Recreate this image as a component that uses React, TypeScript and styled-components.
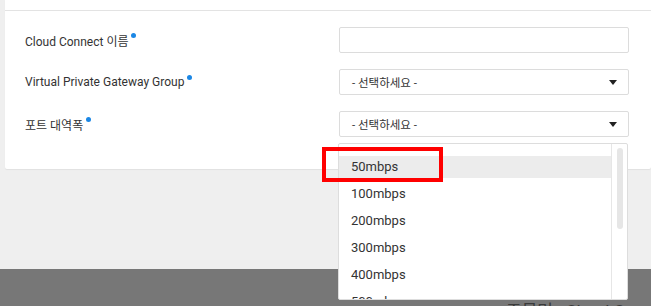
import React from 'react';
import styled, { createGlobalStyle } from 'styled-components';

const GlobalStyle = createGlobalStyle`
  html, body {
    margin: 0;
    padding: 0;
    background: #efefef;
    font-family: Roboto, 'Noto Sans CJK KR', sans-serif;
    color: #333333;
    overflow: hidden;
  }
`;

const Page = styled.div`
  position: relative;
  width: 651px;
  height: 306px;
  overflow: hidden;
`;

const Card = styled.section`
  margin-left: 5px;
  background: #ffffff;
  border-radius: 0 0 2px 2px;
  box-shadow: 0 1px 1px rgba(0, 0, 0, 0.06);
`;

const CardTop = styled.div`
  height: 10px;
  border-bottom: 1px solid #e3e3e3;
`;

const Form = styled.div`
  display: grid;
  grid-template-columns: 1fr 290px;
  row-gap: 16px;
  padding: 16px 22px 32px 20px;
`;

const Label = styled.label`
  display: flex;
  align-items: center;
  height: 26px;
  font-size: 12px;
  color: #333333;
`;

const Required = styled.span`
  width: 5px;
  height: 5px;
  border-radius: 50%;
  background: #1b87e5;
  margin: -9px 0 0 3px;
`;

const TextInput = styled.div`
  box-sizing: border-box;
  height: 26px;
  border: 1px solid #dcdcdc;
  border-radius: 2px;
  background: #fff;
`;

const Select = styled.div`
  box-sizing: border-box;
  height: 26px;
  border: 1px solid #dcdcdc;
  border-radius: 2px;
  background: #fff;
  display: flex;
  align-items: center;
  justify-content: space-between;
  padding: 0 11px 0 12px;
  font-size: 11.5px;
  color: #333;
`;

const Caret = styled.span`
  width: 0;
  height: 0;
  border-left: 4px solid transparent;
  border-right: 4px solid transparent;
  border-top: 5px solid #222;
`;

const Spacer = styled.div`
  height: 100px;
`;

const Footer = styled.footer`
  height: 60px;
  background: #777777;
  position: relative;
`;

const FooterText = styled.div`
  position: absolute;
  left: 506px;
  top: 28px;
  font-size: 17px;
  white-space: nowrap;
  color: #3a3a3a;
`;

const Dropdown = styled.div`
  position: absolute;
  left: 338px;
  top: 143px;
  width: 290px;
  height: 157px;
  box-sizing: border-box;
  border: 1px solid #dddddd;
  border-radius: 2px;
  background: #ffffff;
  display: flex;
  overflow: hidden;
`;

const Options = styled.ul`
  list-style: none;
  margin: 0;
  padding: 12px 0 0;
  flex: 1;
  display: flex;
  flex-direction: column;
  gap: 5px;
`;

const Option = styled.li<{ $active?: boolean }>`
  height: 22px;
  line-height: 22px;
  flex-shrink: 0;
  padding-left: 12px;
  font-size: 13px;
  color: #333;
  background: ${p => (p.$active ? '#ececec' : 'transparent')};
`;

const ScrollTrack = styled.div`
  width: 15px;
  border-left: 1px solid #e6e6e6;
  padding-top: 4px;
  display: flex;
  justify-content: center;
`;

const ScrollThumb = styled.div`
  width: 6px;
  height: 81px;
  border-radius: 3px;
  background: #e6e6e6;
`;

const Highlight = styled.div`
  position: absolute;
  left: 322px;
  top: 147px;
  width: 121px;
  height: 35px;
  box-sizing: border-box;
  border: 4px solid #ff0000;
  pointer-events: none;
`;

const speeds = ['50mbps', '100mbps', '200mbps', '300mbps', '400mbps', '500mbps'];

export default function App() {
  return (
    <Page>
      <GlobalStyle />
      <Card>
        <CardTop />
        <Form>
          <Label>
            Cloud Connect 이름<Required />
          </Label>
          <TextInput />
          <Label>
            Virtual Private Gateway Group<Required />
          </Label>
          <Select>
            - 선택하세요 -<Caret />
          </Select>
          <Label>
            포트 대역폭<Required />
          </Label>
          <Select>
            - 선택하세요 -<Caret />
          </Select>
        </Form>
      </Card>
      <Spacer />
      <Footer>
        <FooterText>주문명 : Cloud Connect가</FooterText>
      </Footer>
      <Dropdown>
        <Options>
          {speeds.map((s, i) => (
            <Option key={s} $active={i === 0}>
              {s}
            </Option>
          ))}
        </Options>
        <ScrollTrack>
          <ScrollThumb />
        </ScrollTrack>
      </Dropdown>
      <Highlight />
    </Page>
  );
}
